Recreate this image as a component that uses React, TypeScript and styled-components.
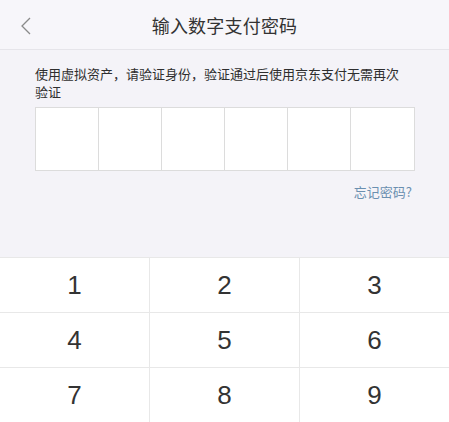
import React from "react";
import styled, { createGlobalStyle } from "styled-components";

const GlobalStyle = createGlobalStyle`
  html, body {
    margin: 0;
    padding: 0;
    background: #f4f3f8;
    font-family: "Noto Sans CJK SC", "Liberation Sans", sans-serif;
  }
`;

const Page = styled.div`
  width: 449px;
  height: 422px;
  display: flex;
  flex-direction: column;
  background: #f4f3f8;
  overflow: hidden;
`;

const Header = styled.div`
  height: 49px;
  flex-shrink: 0;
  display: grid;
  grid-template-columns: 60px 1fr 60px;
  align-items: center;
  background: #f7f6fa;
  border-bottom: 1px solid #e6e5ea;
`;

const Back = styled.div`
  display: flex;
  align-items: center;
  padding-left: 20px;
  padding-top: 2px;
`;

const Title = styled.div`
  text-align: center;
  font-size: 18px;
  color: #333;
  letter-spacing: 0.2px;
`;

const Body = styled.div`
  flex: 1;
  padding: 15px 35px 0 35px;
  display: flex;
  flex-direction: column;
`;

const Hint = styled.p`
  margin: 0;
  max-width: 367px;
  font-size: 13px;
  line-height: 18px;
  color: #2e2e2e;
`;

const Boxes = styled.div`
  margin-top: 6px;
  display: grid;
  grid-template-columns: repeat(6, 63px);
  height: 62px;
  border: 1px solid #dcdcdc;
  background: #fff;
  width: 378px;
`;

const Box = styled.div<{ $last?: boolean }>`
  border-right: ${(p) => (p.$last ? "none" : "1px solid #dcdcdc")};
  background: #fff;
`;

const Forgot = styled.div`
  margin-top: 11px;
  align-self: flex-end;
  margin-right: 2px;
  font-size: 13px;
  color: #6a8fb0;
`;

const Keypad = styled.div`
  flex-shrink: 0;
  display: grid;
  grid-template-columns: 150px 150px 149px;
  grid-auto-rows: 55px;
  background: #fff;
`;

const Key = styled.div<{ $col: number }>`
  display: flex;
  align-items: center;
  justify-content: center;
  font-family: "Liberation Sans", "Noto Sans", sans-serif;
  font-size: 26px;
  color: #333;
  border-top: 1px solid #e8e8e8;
  border-right: ${(p) => (p.$col < 2 ? "1px solid #e8e8e8" : "none")};
`;

const digits = ["1", "2", "3", "4", "5", "6", "7", "8", "9"];

export default function App() {
  return (
    <>
      <GlobalStyle />
      <Page>
        <Header>
          <Back>
            <svg width="12" height="20" viewBox="0 0 12 20">
              <path d="M10 2 L2 10 L10 18" fill="none" stroke="#8a8a8a" strokeWidth="1.3" />
            </svg>
          </Back>
          <Title>输入数字支付密码</Title>
          <div />
        </Header>
        <Body>
          <Hint>使用虚拟资产，请验证身份，验证通过后使用京东支付无需再次验证</Hint>
          <Boxes>
            {[0, 1, 2, 3, 4, 5].map((i) => (
              <Box key={i} $last={i === 5} />
            ))}
          </Boxes>
          <Forgot>忘记密码?</Forgot>
        </Body>
        <Keypad>
          {digits.map((d, i) => (
            <Key key={d} $col={i % 3}>
              {d}
            </Key>
          ))}
        </Keypad>
      </Page>
    </>
  );
}
